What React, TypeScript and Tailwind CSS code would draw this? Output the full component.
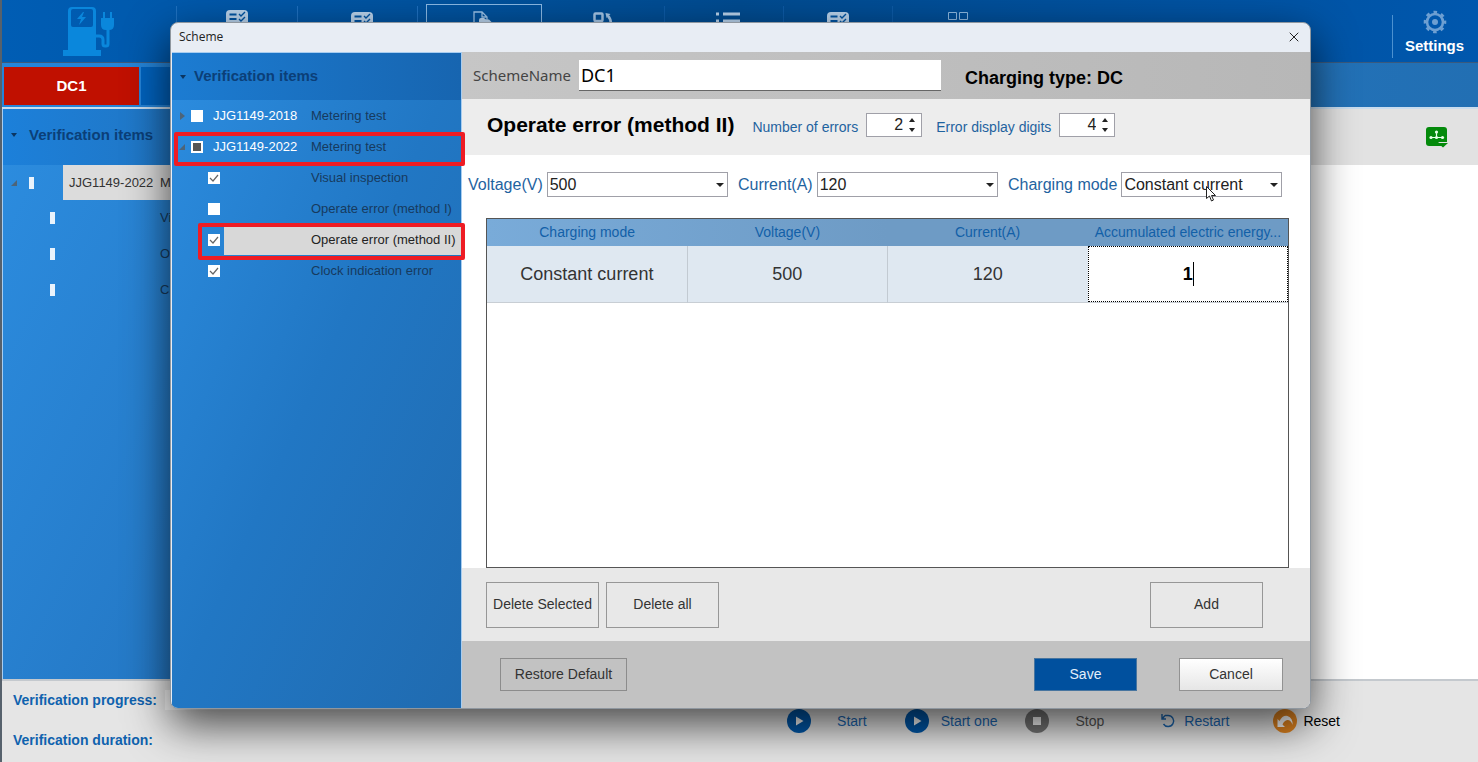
import type { ReactNode } from "react";
import { X } from "lucide-react";

const schemeItems = [
    { code: "JJG1149-2018", name: "Metering test", level: 0, state: "off", open: false },
    { code: "JJG1149-2022", name: "Metering test", level: 0, state: "partial", open: true, marked: true },
    { code: "", name: "Visual inspection", level: 1, state: "on" },
    { code: "", name: "Operate error (method I)", level: 1, state: "off" },
    { code: "", name: "Operate error (method II)", level: 1, state: "on", selected: true, marked: true },
    { code: "", name: "Clock indication error", level: 1, state: "on" },
];

const pageItems = ["Visual inspection", "Operate error (method II)", "Clock indication error"];

function ChecklistIcon() {
    return (
        <svg width="22" height="22" viewBox="0 0 22 22">
            <rect width="22" height="22" rx="4" fill="#b9d3ec" />
            <path d="M3.5 4.500h7M3.5 9h7M3.5 16h7" stroke="#0054a3" strokeWidth="1.8" />
            <path d="M13 4l2 2 4-4M13 9l2 2 4-4M13 16l2 2 4-4" stroke="#0054a3" strokeWidth="1.4" fill="none" />
        </svg>
    );
}

function PageIcon() {
    return (
        <svg width="22" height="22" viewBox="0 0 22 22">
            <path d="M1 21V1h8l5 5v3M9 1v5h5" stroke="#9cc3e8" strokeWidth="1.3" fill="none" />
            <path d="M6 9q0-2 2-2h3l2 1.500h3l3 3h2v11H6z" fill="#b9d3ec" />
        </svg>
    );
}

function CopyIcon() {
    return (
        <svg width="20" height="22" viewBox="0 0 20 22" fill="none" stroke="#a5c6e6">
            <rect x="1.5" y="1.5" width="8" height="7.500" rx="1" strokeWidth="2.5" />
            <path d="M15 4q3 3 3 8" strokeWidth="2.5" />
            <path d="M12.500 1l5 1-4 4z" fill="#a5c6e6" stroke="none" />
            <path d="M3 13v7h6" strokeWidth="2.5" />
        </svg>
    );
}

function ListIcon() {
    return (
        <svg width="24" height="22" viewBox="0 0 24 22" stroke="#b9d3ec" strokeWidth="3">
            <path d="M0 2h3M7 2h17M0 9h3M7 9h17M0 16h3M7 16h17" />
        </svg>
    );
}

function GridIcon() {
    return (
        <svg width="20" height="20" viewBox="0 0 20 20" fill="none" stroke="#8db8e0">
            <path d="M.5 .5h8v7h-8zM11.5 .5h8v7h-8zM.5 11.5h8v8h-8zM11.5 11.5h8v8h-8z" />
        </svg>
    );
}

function ChargerLogo() {
    return (
        <svg width="52" height="50" viewBox="0 0 52 50" fill="#0a87dc">
            <path fillRule="evenodd" d="M5 4q0-4 4-4h20q4 0 4 4v39h5v6H0v-6h5zM8 4v14q0 2 2 2h18q2 0 2-2V4q0-2-2-2H10Q8 2 8 4z" />
            <path d="M20 5l-6 7h4l-2 6 7-8h-4l2-5z" />
            <path d="M33 29h3q4 0 4 4v4q0 2 2 2h1q2 0 2-2V23" fill="none" stroke="#0a87dc" strokeWidth="3" />
            <path d="M40 5h2v6h5V5h2v6h2v7q0 5-5 5h-3q-5 0-5-5v-7h2z" />
        </svg>
    );
}

function GearIcon() {
    return (
        <svg width="24" height="24" viewBox="0 0 24 24" fill="none" stroke="#6d9fd2" className="shrink-0">
            <circle cx="12" cy="12" r="8" strokeWidth="2.6" />
            <circle cx="12" cy="12" r="10" strokeWidth="2.6" strokeDasharray="3.6 4.254" strokeDashoffset="1.8" />
            <circle cx="12" cy="12" r="3" fill="#6d9fd2" stroke="none" />
        </svg>
    );
}

function NetworkIcon() {
    return (
        <svg width="22" height="21" viewBox="0 0 22 21">
            <rect width="21" height="19" rx="3" fill="#048a0b" />
            <path d="M10.5 5v6M5 10.5h11" stroke="#e6ffe6" strokeWidth="1.2" />
            <g fill="#e6ffe6">
                <circle cx="10.5" cy="5" r="1.6" />
                <circle cx="5" cy="10.5" r="1.6" />
                <circle cx="10.5" cy="10.5" r="1.6" />
                <circle cx="16.5" cy="10.5" r="1.6" />
            </g>
            <path d="M12 15h9.500v4H17z" fill="#e2e2e2" />
            <path d="M12 16h10l-5 4.500z" fill="#048a0b" />
        </svg>
    );
}

function PlayIcon() {
    return (
        <svg width="24" height="24" viewBox="0 0 24 24">
            <circle cx="12" cy="12" r="12" fill="#0059ac" />
            <path d="M9 7.5l7.5 4.5L9 16.5z" fill="#fff" />
        </svg>
    );
}

function StopIcon() {
    return (
        <svg width="24" height="24" viewBox="0 0 24 24">
            <circle cx="12" cy="12" r="12" fill="#777" />
            <path d="M8 8h8v8H8z" fill="#fff" />
        </svg>
    );
}

function RestartIcon() {
    return (
        <svg width="16" height="16" viewBox="0 0 16 16" fill="none" stroke="#1c68b3" strokeWidth="1.4">
            <path d="M5 2.500h3a5.500 5.500 0 1 1-4.500 8.500M2 1v5h4M2 6l3-3.500" />
        </svg>
    );
}

function ResetIcon() {
    return (
        <svg width="24" height="24" viewBox="0 0 24 24">
            <circle cx="12" cy="12" r="12" fill="#e08420" />
            <path d="M4.500 10v8h7.500l-2.500-2.500q1.500-4 5-4.500 3.500 0 5 5 .5-7-5-9-5-1-8 5z" fill="#fff" />
        </svg>
    );
}

function CaretDown() {
    return (
        <svg width="8" height="4" viewBox="0 0 8 4" className="pointer-events-none absolute right-1 top-1/2 -mt-0.5">
            <path d="M0 0h8L4 4z" fill="#222" />
        </svg>
    );
}

function TreeArrow({ open }: { open?: boolean }) {
    return (
        <svg width="6" height="8" viewBox="0 0 6 8" className="shrink-0">
            <path d={open ? "M6 1v6H0z" : "M1 0l5 4-5 4z"} fill="#4d6478" />
        </svg>
    );
}

function HeaderArrow() {
    return (
        <svg width="6" height="4" viewBox="0 0 6 4" className="shrink-0">
            <path d="M0 0h6L3 4z" fill="#0b3561" />
        </svg>
    );
}

function CheckBox({ state, label }: { state: string; label: string }) {
    return (
        <span className="relative grid size-3 shrink-0 place-items-center">
            <input
                type="checkbox"
                aria-label={label}
                defaultChecked={state === "on"}
                className="size-3 appearance-none bg-white"
            />
            {state === "on" && (
                <svg width="12" height="12" viewBox="0 0 12 12" className="pointer-events-none absolute">
                    <path d="M2 6l3 3 5-6" fill="none" stroke="#666" strokeWidth="1.2" />
                </svg>
            )}
            {state === "partial" && <span className="pointer-events-none absolute size-2 bg-[#555]" />}
        </span>
    );
}

function ToolButton({ label, className, children }: { label: string; className: string; children: ReactNode }) {
    return (
        <button aria-label={label} className={`flex shrink-0 justify-center ${className}`}>
            {children}
        </button>
    );
}

function SelectField({ id, label, value, className }: { id: string; label: string; value: string; className: string }) {
    return (
        <div className={`flex items-center gap-1 ${className}`}>
            <label htmlFor={id} className="text-base text-[#1f639f]">{label}</label>
            <div className="relative min-w-0 flex-1">
                <select id={id} className="block h-[25px] w-full appearance-none border border-[#a0a0a8] bg-white px-0.5 text-base leading-5 text-[#222]">
                    <option>{value}</option>
                </select>
                <CaretDown />
            </div>
        </div>
    );
}

function NumberField({ id, label, value }: { id: string; label: string; value: string }) {
    return (
        <div className="flex items-center gap-2">
            <label htmlFor={id} className="pt-1 text-[14px] text-[#1f639f]">{label}</label>
            <div className="flex h-6 w-14 border border-[#a0a0a8] bg-white">
                <input id={id} defaultValue={value} className="w-9 min-w-0 text-right text-base text-[#222] outline-none" />
                <div className="flex flex-1 flex-col items-center justify-center gap-1.5">
                    <button aria-label={`Increase ${label}`}>
                        <svg width="6" height="4" viewBox="0 0 6 4" className="block"><path d="M0 4h6L3 0z" fill="#222" /></svg>
                    </button>
                    <button aria-label={`Decrease ${label}`}>
                        <svg width="6" height="4" viewBox="0 0 6 4" className="block"><path d="M0 0h6L3 4z" fill="#222" /></svg>
                    </button>
                </div>
            </div>
        </div>
    );
}

function MainWindow() {
    return (
        <div className="flex min-h-screen flex-col border-l-2 border-[#56616c] bg-[#e5e5e5]">
            {/* Toolbar */}
            <header className="flex h-[63px] items-end border-b border-[#3b5a7d] bg-linear-to-r from-[#005db4] via-[#004b90] to-[#0057ad]">
                <div className="flex h-full w-[174px] shrink-0 items-start justify-center pt-[7px]">
                    <ChargerLogo />
                </div>
                <ToolButton label="Detection" className="h-14 w-[121px] border-l border-[#1f70bf] pt-1"><ChecklistIcon /></ToolButton>
                <ToolButton label="Parameters" className="h-14 w-[120px] border-l border-[#1f70bf] pt-1.5 pl-2"><ChecklistIcon /></ToolButton>
                <span className="mr-2 h-14 w-px bg-[#1f70bf]" />
                <ToolButton label="Scheme" className="mb-0.5 h-14 w-[116px] border border-[#8ab9e4] pt-1.5"><PageIcon /></ToolButton>
                <ToolButton label="Data" className="h-14 w-[122px] pt-1.5"><CopyIcon /></ToolButton>
                <ToolButton label="Records" className="h-14 w-[119px] border-l border-[#0d5aa5] pt-1.5 pl-2"><ListIcon /></ToolButton>
                <ToolButton label="Report" className="h-14 w-[109px] border-l border-[#0d5aa5] pt-1.5"><ChecklistIcon /></ToolButton>
                <ToolButton label="Modules" className="h-14 w-[130px] border-l border-[#0d5aa5] pt-1.5"><GridIcon /></ToolButton>
                <button className="mb-1 ml-auto flex h-[43px] w-[86px] flex-col items-center justify-end gap-0.5 border-l border-[#4c91d0] pr-0.5 pb-0.5 text-[15px] leading-5 font-bold text-white">
                    <GearIcon />
                    Settings
                </button>
            </header>

            {/* Channel tabs */}
            <nav className="flex h-[46px] gap-0.5 border-b-2 border-[#c9dcee] bg-linear-to-r from-[#2585da] to-[#226fb3] pt-1 pb-0.5 pl-0.5">
                <button className="w-[135px] bg-[#c01000] text-[15px] font-bold text-white">DC1</button>
                <button aria-label="DC2" className="w-[135px] bg-[#0062bd]" />
            </nav>

            <main className="flex flex-1">
                <aside className="w-[290px] border-l border-[#a8cdf0] bg-linear-to-br from-[#2c8de0] to-[#2272bd]">
                    <h2 className="flex h-14 items-center gap-3 bg-linear-to-r from-[#1c80da] to-[#226fb5] pb-1 pl-2 text-[15px] font-bold text-[#0b3f78]">
                        <HeaderArrow />
                        Verification items
                    </h2>
                    <ul className="text-[13px] whitespace-nowrap text-[#16395c]">
                        <li className="flex h-[35px] items-center">
                            <span className="flex w-[60px] items-center gap-3 pl-2">
                                <TreeArrow open />
                                <span className="h-3 w-[5px] bg-[#e9f3fc]" />
                            </span>
                            <span className="flex h-full flex-1 items-center bg-[#dcdcdc] pl-1.5 text-[#333]">
                                <span className="w-[91px]">JJG1149-2022</span>
                                Metering test
                            </span>
                        </li>
                        {pageItems.map((name) => (
                            <li key={name} className="flex h-9 items-center pl-[47px]">
                                <span className="mr-[105px] h-3 w-[5px] shrink-0 bg-[#e9f3fc]" />
                                {name}
                            </li>
                        ))}
                    </ul>
                </aside>
                <section className="flex-1 bg-white">
                    <div className="flex h-14 items-center justify-end bg-[#e2e2e2] pr-[30px]">
                        <button aria-label="Network"><NetworkIcon /></button>
                    </div>
                </section>
            </main>

            {/* Status and run controls */}
            <footer className="flex h-[83px] items-center border-t-2 border-[#c4c9ce] text-[#1c68b3]">
                <div className="flex flex-1 flex-col gap-5 pb-1 pl-[11px] text-[14px] leading-5 font-bold text-[#0f62ae]">
                    <div className="flex gap-2">
                        <span>Verification progress:</span>
                        <span className="h-5 w-[242px] bg-[#f4f4f4]" />
                    </div>
                    <span>Verification duration:</span>
                </div>
                <div className="mr-[138px] flex items-center gap-5 self-start pt-7 text-[14px] leading-6">
                    <button className="flex items-center gap-[26px] pr-[18px]"><PlayIcon />Start</button>
                    <button className="flex items-center gap-3 pr-2"><PlayIcon />Start one</button>
                    <button className="flex items-center gap-[26px] pr-9 text-[#555]"><StopIcon />Stop</button>
                    <button className="flex items-center gap-2 pr-6"><RestartIcon />Restart</button>
                    <button className="flex items-center gap-1.5 text-black"><ResetIcon />Reset</button>
                </div>
            </footer>
        </div>
    );
}

function SchemeTree() {
    return (
        <aside className="w-[290px] shrink-0 border-t border-r border-[#a8cdf0] bg-linear-to-br from-[#2c8de0] via-[#2177c4] to-[#206bb0]">
            <h2 className="flex h-[47px] items-center gap-2 bg-linear-to-r from-[#1c7cd2] to-[#1765b0] pl-2 text-[15px] font-bold text-[#0b3f78]">
                <HeaderArrow />
                Verification items
            </h2>
            <ul className="text-[13px]">
                {schemeItems.map((item) => (
                    <li key={item.code + item.name} className="relative flex h-[31px] items-center">
                        {item.level === 0 ? (
                            <span className="flex w-[41px] items-center gap-1.5 pl-[7px]">
                                <TreeArrow open={item.open} />
                                <CheckBox state={item.state} label={item.code} />
                            </span>
                        ) : (
                            <span className="flex w-[52px] items-center pl-9">
                                <CheckBox state={item.state} label={item.name} />
                            </span>
                        )}
                        {item.level === 0 && <span className="w-[98px] text-white">{item.code}</span>}
                        <span className={item.level === 0
                            ? "text-[#173a5e]"
                            : item.selected
                                ? "flex h-[30px] flex-1 items-center bg-[#d8d8d8] pl-[87px] text-[#222]"
                                : "pl-[87px] text-[#173a5e]"}
                        >
                            {item.name}
                        </span>
                        {item.marked && (
                            <span className={item.level === 0
                                ? "pointer-events-none absolute top-px -right-1 left-0.5 h-[34px] rounded-xs border-4 border-[#ee1c24]"
                                : "pointer-events-none absolute -top-px -right-1 left-[26px] h-[37px] rounded-xs border-4 border-[#ee1c24]"}
                            />
                        )}
                    </li>
                ))}
            </ul>
        </aside>
    );
}

function ResultTable() {
    return (
        <div className="mr-[21px] ml-6 flex-1 border border-[#555] bg-white">
            <table className="w-full table-fixed border-collapse text-center">
                <thead>
                    <tr className="h-[27px] bg-linear-to-r from-[#79abd9] via-[#6e9bc5] to-[#6e9bc5] text-[14px] whitespace-nowrap text-[#1260a8]">
                        <th className="p-0 font-normal">Charging mode</th>
                        <th className="p-0 font-normal">Voltage(V)</th>
                        <th className="p-0 font-normal">Current(A)</th>
                        <th className="p-0 font-normal">Accumulated electric energy...</th>
                    </tr>
                </thead>
                <tbody>
                    <tr className="h-14 border-b border-[#c8ced4] bg-[#dfe8f1] text-lg text-[#333]">
                        <td className="border-r border-[#c2cad2]">Constant current</td>
                        <td className="border-r border-[#c2cad2]">500</td>
                        <td>120</td>
                        <td className="relative bg-white p-0">
                            <input
                                aria-label="Accumulated electric energy"
                                defaultValue="1"
                                className="block h-14 w-full border border-dotted border-black bg-white text-center font-bold text-black outline-none"
                            />
                            <span className="pointer-events-none absolute top-4 left-1/2 ml-[5px] h-6 w-px bg-black" />
                        </td>
                    </tr>
                </tbody>
            </table>
        </div>
    );
}

function SchemeDialog() {
    return (
        <div role="dialog" aria-label="Scheme" className="flex flex-1 flex-col overflow-hidden rounded-lg border border-[#8f979f] bg-[#e8edf4] shadow-[0_16px_44px_rgba(0,0,0,0.7)]">
            <div className="flex h-[29px] shrink-0 items-center justify-between pr-2 pb-0.5 pl-2 font-['Open_Sans',sans-serif] text-xs text-[#222]">
                Scheme
                <button aria-label="Close"><X size={16} strokeWidth={1.5} /></button>
            </div>
            <div className="flex flex-1 pl-px">
                <SchemeTree />
                <div className="flex min-w-0 flex-1 flex-col">
                    <div className="flex h-[47px] items-center bg-linear-to-r from-[#c6c6c6] to-[#b7b7b7] pl-[11px]">
                        <label htmlFor="scheme-name" className="mr-2 font-['Noto_Sans',sans-serif] text-[15px] text-[#444]">SchemeName</label>
                        <input
                            id="scheme-name"
                            defaultValue="DC1"
                            className="h-[31px] w-[362px] border-b border-[#666] bg-white px-0.5 font-['Noto_Sans',sans-serif] text-lg text-black outline-none"
                        />
                        <span className="ml-6 pt-1 text-lg font-bold text-black">Charging type: DC</span>
                    </div>
                    <div className="flex h-14 items-center gap-[14px] bg-[#ededed] pb-1 pl-[25px]">
                        <h1 className="mr-1 text-[21px] font-bold text-black">Operate error (method II)</h1>
                        <NumberField id="error-count" label="Number of errors" value="2" />
                        <NumberField id="error-digits" label="Error display digits" value="4" />
                    </div>
                    <div className="flex flex-1 flex-col bg-white">
                        <div className="flex h-[63px] items-center gap-2.5 pr-7 pb-1 pl-1.5">
                            <SelectField id="voltage" label="Voltage(V)" value="500" className="flex-1" />
                            <SelectField id="current" label="Current(A)" value="120" className="flex-1" />
                            <SelectField id="mode" label="Charging mode" value="Constant current" className="w-[274px]" />
                        </div>
                        <ResultTable />
                    </div>
                    <div className="flex h-[73px] items-center gap-[7px] bg-[#e8e8e8] pr-[47px] pl-6 text-[14px] text-[#333]">
                        <button className="h-[46px] w-[113px] border border-[#979797]">Delete Selected</button>
                        <button className="h-[46px] w-[113px] border border-[#979797]">Delete all</button>
                        <button className="ml-auto h-[46px] w-[113px] border border-[#979797]">Add</button>
                    </div>
                    <div className="flex h-[67px] items-center bg-[#c2c2c2] pr-[27px] pl-[38px] text-[14px] text-[#333]">
                        <button className="h-[33px] w-[127px] border border-[#8c8c8c]">Restore Default</button>
                        <button className="mr-[42px] ml-auto h-[33px] w-[103px] border border-[#48759f] bg-[#00509e] text-[#e3eefa]">Save</button>
                        <button className="h-[33px] w-[104px] border border-[#929292] bg-linear-to-b from-white to-[#e6e6e6]">Cancel</button>
                    </div>
                </div>
            </div>
        </div>
    );
}

function Cursor() {
    return (
        <svg width="10" height="16" viewBox="0 0 10 16" className="pointer-events-none absolute top-[186px] right-[262px]">
            <path d="M.5 .5v12l3-2.500 2 5 2-1-2-4.500h4z" fill="#fff" stroke="#222" />
        </svg>
    );
}

export default function App() {
    return (
        <div className="relative overflow-hidden font-['Liberation_Sans',Arial,sans-serif]">
            <MainWindow />
            <div className="absolute inset-0 flex pt-[22px] pr-[167px] pb-[53px] pl-[170px]">
                <SchemeDialog />
            </div>
            <Cursor />
        </div>
    );
}
